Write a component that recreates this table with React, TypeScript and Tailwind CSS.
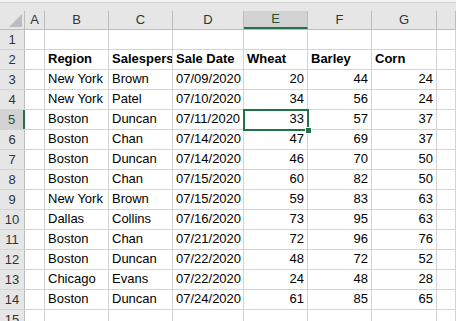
import React from 'react';

const cols = [
  { key: 'A', w: 'w-[20px]' },
  { key: 'B', w: 'w-[64px]' },
  { key: 'C', w: 'w-[64px]' },
  { key: 'D', w: 'w-[71px]' },
  { key: 'E', w: 'w-[64px]' },
  { key: 'F', w: 'w-[64px]' },
  { key: 'G', w: 'w-[65px]' },
  { key: 'H', w: 'flex-1' },
];

type Row = [string, string, string, number, number, number];

const data: Row[] = [
  ['New York', 'Brown', '07/09/2020', 20, 44, 24],
  ['New York', 'Patel', '07/10/2020', 34, 56, 24],
  ['Boston', 'Duncan', '07/11/2020', 33, 57, 37],
  ['Boston', 'Chan', '07/14/2020', 47, 69, 37],
  ['Boston', 'Duncan', '07/14/2020', 46, 70, 50],
  ['Boston', 'Chan', '07/15/2020', 60, 82, 50],
  ['New York', 'Brown', '07/15/2020', 59, 83, 63],
  ['Dallas', 'Collins', '07/16/2020', 73, 95, 63],
  ['Boston', 'Chan', '07/21/2020', 72, 96, 76],
  ['Boston', 'Duncan', '07/22/2020', 48, 72, 52],
  ['Chicago', 'Evans', '07/22/2020', 24, 48, 28],
  ['Boston', 'Duncan', '07/24/2020', 61, 85, 65],
];

function Cell({ w, children, right, bold }: { w: string; children?: React.ReactNode; right?: boolean; bold?: boolean }) {
  return (
    <div
      className={`${w} shrink-0 h-full border-r border-[#d4d4d4] flex items-end pb-[1px] overflow-hidden whitespace-nowrap ${
        right ? 'justify-end pr-[3px]' : 'pl-[3px]'
      } ${bold ? 'font-bold' : ''}`}
    >
      {children}
    </div>
  );
}

function RowHead({ n, active }: { n: number; active?: boolean }) {
  return (
    <div
      className={`w-[25px] shrink-0 h-full flex items-center justify-center border-r border-[#bdbdbd] ${
        active ? 'bg-[#d2d2d2] border-r-2 border-r-[#217346] text-[#215732]' : 'bg-[#e6e6e6] text-[#333]'
      }`}
    >
      {n}
    </div>
  );
}

export default function App() {
  const rows: (Row | null | 'hdr')[] = [null, 'hdr', ...data, null];

  return (
    <div className="w-[456px] h-[321px] overflow-hidden bg-white text-[13px] text-black relative" style={{ fontFamily: '"Liberation Sans", Arial, sans-serif' }}>
      {/* formula bar edge */}
      <div className="h-[3px] bg-[#f3f3f3] border-b border-[#d6d6d6]" />
      <div className="h-[8px] bg-[#e6e6e6]" />

      {/* column headers */}
      <div className="flex h-[19px] bg-[#e6e6e6] border-b border-[#bdbdbd] text-[#333]">
        <div className="w-[25px] shrink-0 h-full border-r border-[#bdbdbd] flex items-end justify-end pr-[2px] pb-[2px]">
          <svg width="13" height="13" viewBox="0 0 13 13">
            <polygon points="13,0 13,13 0,13" fill="#bdbdbd" />
          </svg>
        </div>
        {cols.map((c) => (
          <div
            key={c.key}
            className={`${c.w} shrink-0 h-full flex items-center justify-center border-r border-[#bdbdbd] ${
              c.key === 'E' ? 'bg-[#d2d2d2] border-b-2 border-b-[#217346] text-[#215732]' : ''
            }`}
          >
            {c.key === 'H' ? '' : c.key}
          </div>
        ))}
      </div>

      {/* grid rows */}
      {rows.map((r, i) => (
        <div key={i} className="flex h-[20px] border-b border-[#d4d4d4]">
          <RowHead n={i + 1} active={i === 4} />
          <Cell w="w-[20px]" />
          {r === 'hdr' ? (
            <>
              <Cell w="w-[64px]" bold>Region</Cell>
              <Cell w="w-[64px]" bold>Salesperson</Cell>
              <Cell w="w-[71px]" bold>Sale Date</Cell>
              <Cell w="w-[64px]" bold>Wheat</Cell>
              <Cell w="w-[64px]" bold>Barley</Cell>
              <Cell w="w-[65px]" bold>Corn</Cell>
            </>
          ) : r ? (
            <>
              <Cell w="w-[64px]">{r[0]}</Cell>
              <Cell w="w-[64px]">{r[1]}</Cell>
              <Cell w="w-[71px]">{r[2]}</Cell>
              <Cell w="w-[64px]" right>{r[3]}</Cell>
              <Cell w="w-[64px]" right>{r[4]}</Cell>
              <Cell w="w-[65px]" right>{r[5]}</Cell>
            </>
          ) : (
            <>
              <Cell w="w-[64px]" />
              <Cell w="w-[64px]" />
              <Cell w="w-[71px]" />
              <Cell w="w-[64px]" />
              <Cell w="w-[64px]" />
              <Cell w="w-[65px]" />
            </>
          )}
          <Cell w="flex-1" />
        </div>
      ))}

      {/* active cell E5 */}
      <div className="absolute left-[243px] top-[109px] w-[66px] h-[22px] border-2 border-[#217346] pointer-events-none" />
      <div className="absolute left-[305px] top-[127px] w-[7px] h-[7px] bg-[#217346] border border-white" />
    </div>
  );
}
